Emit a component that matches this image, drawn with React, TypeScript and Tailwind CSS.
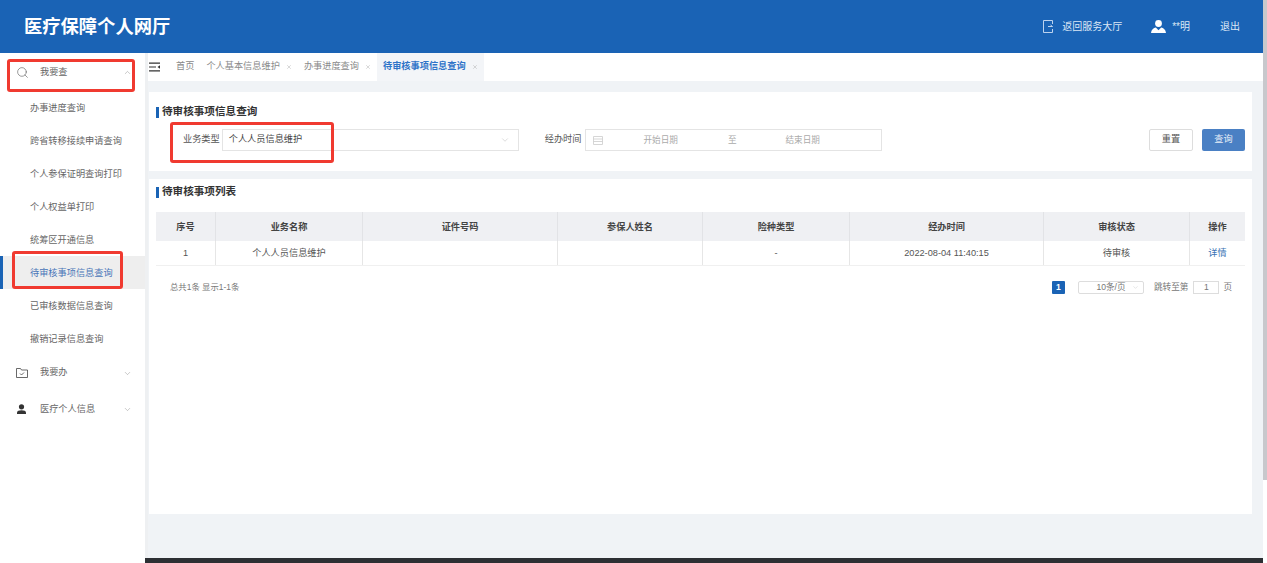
import { ChevronDown, ChevronUp, Search, X } from 'lucide-react';

const font = { fontFamily: '"Liberation Sans", "Noto Sans CJK SC", sans-serif' };

const subMenus = ['办事进度查询', '跨省转移接续申请查询', '个人参保证明查询打印', '个人权益单打印', '统筹区开通信息', '待审核事项信息查询', '已审核数据信息查询', '撤销记录信息查询'];

const columns = [
  { title: '序号', width: 'w-[60px]', value: '1' },
  { title: '业务名称', width: 'w-[147px]', value: '个人人员信息维护' },
  { title: '证件号码', width: 'w-[195px]', value: '' },
  { title: '参保人姓名', width: 'w-[145px]', value: '' },
  { title: '险种类型', width: 'w-[147px]', value: '-' },
  { title: '经办时间', width: 'w-[194px]', value: '2022-08-04 11:40:15' },
  { title: '审核状态', width: 'w-[146px]', value: '待审核' },
  { title: '操作', width: 'w-[55px]', value: '详情' },
];

function SectionTitle({ text }: { text: string }) {
  return (
    <div className="flex items-center h-[14px] text-[10.6px] font-bold text-[#333]">
      <span className="w-[3px] h-[11px] bg-[#1a63b5] mr-[3px]"></span>
      {text}
    </div>
  );
}

function Tab({ text, active }: { text: string; active?: boolean }) {
  return (
    <div className={active ? 'h-[28px] -mt-[1px] px-[6px] flex items-center bg-[#f3f5f8] text-[#2f74c8] font-bold' : 'h-[28px] px-[6px] flex items-center text-[#8a8a8a]'}>
      {text}
      {text !== '首页' && <X size={6} strokeWidth={1.5} className="ml-[6px] text-[#999]" />}
    </div>
  );
}

function RedBox({ className }: { className: string }) {
  return <div className={'absolute border-[3px] border-[#f03a30] rounded-[3px] ' + className}></div>;
}

export default function App() {
  return (
    <div style={font} className="relative w-[1267px] h-[563px] overflow-hidden bg-white flex text-[9.2px] text-[#555]">
      <div className="flex-none w-[1263px] flex flex-col">
        <div className="flex-none h-[53px] bg-[#1a63b5] flex items-center text-white pl-[24px]">
          <div className="text-[18.3px] font-bold">医疗保障个人网厅</div>
          <div className="ml-auto flex items-center text-[10px] text-[#dbe7f5]">
            <svg width="10" height="13" viewBox="0 0 10 13" fill="none" stroke="#cfe0f5" strokeWidth="0.9" className="mr-[9px]">
              <path d="M9.500 4V0.500H0.500v12h9V9" />
              <path d="M5 6.500h4.500M7.500 5l2 1.500" />
            </svg>
            <span>返回服务大厅</span>
            <svg width="15" height="13" viewBox="0 0 15 13" fill="#fff" className="ml-[29px] mr-[6px]">
              <circle cx="7.500" cy="3.500" r="3.400" />
              <path d="M0 13c0.300-3.500 2.500-5 4.800-5.500l2.700 2.700 2.700-2.700c2.300 0.500 4.500 2 4.800 5.500z" />
            </svg>
            <span>**明</span>
            <span className="ml-[30px] mr-[23px]">退出</span>
          </div>
        </div>

        <div className="flex-1 flex min-h-0">
          <div className="flex-none w-[145px] bg-white">
            <div className="h-[38px] pt-[1px] pl-[16px] pr-[13px] flex items-center text-[#666]">
              <Search size={13} strokeWidth={1} className="text-[#444] mr-[11px]" />
              <span>我要查</span>
              <ChevronUp size={9} strokeWidth={1.2} className="ml-auto text-[#888]" />
            </div>
            <div className="flex flex-col">
              {subMenus.map((name) => (
                <div
                  key={name}
                  className={name === '待审核事项信息查询' ? 'h-[33px] pt-[2px] pl-[27px] flex items-center bg-[#eeeeee] text-[#4a76b8] border-l-[3px] border-[#1a63b5]' : 'h-[33px] pt-[2px] pl-[30px] flex items-center text-[#666]'}
                >
                  {name}
                </div>
              ))}
            </div>
            <div className="h-[36px] pl-[16px] pr-[13px] flex items-center text-[#666]">
              <svg width="12" height="10" viewBox="0 0 12 10" fill="none" stroke="#444" strokeWidth="0.8" className="mr-[12px]">
                <path d="M0.500 0.500h4l1 1.500h6v7.500h-11z" />
                <path d="M4 5.500l1.500 1.500 2.500-2.500" />
              </svg>
              <span>我要办</span>
              <ChevronDown size={9} strokeWidth={1.2} className="ml-auto text-[#888]" />
            </div>
            <div className="h-[37px] pl-[16px] pr-[13px] flex items-center text-[#666]">
              <svg width="11" height="11" viewBox="0 0 11 11" fill="#333" className="mr-[13px]">
                <circle cx="5.500" cy="2.800" r="2.600" />
                <path d="M1 10V8.500C1 7 3 6.300 5.500 6.300S10 7 10 8.500V10z" />
              </svg>
              <span>医疗个人信息</span>
              <ChevronDown size={9} strokeWidth={1.2} className="ml-auto text-[#888]" />
            </div>
          </div>

          <div className="flex-1 flex flex-col border-l-[3px] border-[#eef0f2] bg-[#f0f3f6] min-w-0">
            <div className="flex-none h-[28px] bg-white flex items-center pl-[1px]">
              <svg width="11" height="10" viewBox="0 0 11 10" fill="#333" className="mr-[10px]">
                <path d="M0 0.500h11v1.200H0zM0 4.400h7v1.200H0zM0 8.300h11v1.200H0zM11 3.200v3.600L8.500 5z" />
              </svg>
              <Tab text="首页" />
              <Tab text="个人基本信息维护" />
              <Tab text="办事进度查询" />
              <Tab text="待审核事项信息查询" active />
            </div>

            <div className="flex-1 min-h-0 pt-[11px] pr-[11px] pl-[1px] flex flex-col">
              <div className="flex-none h-[79px] bg-white pt-[13px] pl-[7px] pr-[7px]">
                <SectionTitle text="待审核事项信息查询" />
                <div className="mt-[10px] flex items-center h-[22px] pl-[27px]">
                  <span className="mr-[2px]">业务类型</span>
                  <div className="w-[297px] h-[22px] border border-[#e4e4e4] flex items-center pl-[6px] pr-[8px] text-[#444]">
                    个人人员信息维护
                    <ChevronDown size={10} strokeWidth={1} className="ml-auto text-[#aaa]" />
                  </div>
                  <span className="ml-[26px] mr-[3px]">经办时间</span>
                  <div className="w-[297px] h-[22px] border border-[#e4e4e4] flex items-center pl-[7px] text-[8.6px] text-[#aaa]">
                    <svg width="10" height="9" viewBox="0 0 10 9" fill="none" stroke="#ccc" strokeWidth="0.8">
                      <path d="M0.500 0.500h9v8h-9zM0.500 3h9M0.500 5.500h9" />
                    </svg>
                    <span className="ml-[41px]">开始日期</span>
                    <span className="ml-[50px]">至</span>
                    <span className="ml-[49px]">结束日期</span>
                  </div>
                  <button className="ml-auto w-[44px] h-[22px] border border-[#ddd] rounded-[2px] bg-white text-[#555]">重置</button>
                  <button className="ml-[9px] w-[43px] h-[22px] rounded-[2px] bg-[#4a80c4] text-[#e8eff8]">查询</button>
                </div>
              </div>

              <div className="flex-none mt-[8px] h-[335px] bg-white pt-[6px] px-[7px]">
                <SectionTitle text="待审核事项列表" />
                <div className="mt-[13px]">
                  <div className="flex h-[29px] bg-[#eff0f3] font-bold text-[#444]">
                    {columns.map((c) => (
                      <div key={c.title} className={c.width + ' flex-none pt-[2px] flex items-center justify-center border-r border-[#e2e3e6] last:border-r-0'}>
                        {c.title}
                      </div>
                    ))}
                  </div>
                  <div className="flex h-[25px] border-b border-[#f0f0f0]">
                    {columns.map((c) => (
                      <div key={c.title} className={c.width + ' flex-none pt-[1px] flex items-center justify-center border-r border-[#e6e6e6] last:border-r-0 ' + (c.value === '详情' ? 'text-[#3b73b5]' : '')}>
                        {c.value}
                      </div>
                    ))}
                  </div>
                  <div className="flex items-center mt-[15px] h-[13px] pl-[14px] text-[8.6px] text-[#777]">
                    <span className="text-[8.4px]">总共1条 显示1-1条</span>
                    <div className="ml-auto flex items-center pr-[13px]">
                      <span className="w-[13px] h-[13px] bg-[#1a63b5] rounded-[1px] text-white flex items-center justify-center font-bold">1</span>
                      <div className="ml-[13px] w-[66px] h-[13px] border border-[#ddd] rounded-[2px] flex items-center justify-center relative">
                        10条/页
                        <ChevronDown size={7} strokeWidth={1} className="absolute right-[4px] text-[#aaa]" />
                      </div>
                      <span className="ml-[10px]">跳转至第</span>
                      <div className="ml-[5px] w-[26px] h-[13px] border border-[#ddd] flex items-center justify-center">1</div>
                      <span className="ml-[4px]">页</span>
                    </div>
                  </div>
                </div>
              </div>
            </div>
            <div className="flex-none h-[5px] -ml-[3px] bg-[#2c2f33]"></div>
          </div>
        </div>
      </div>

      <div className="flex-none w-[4px]">
        <div className="h-[480px] bg-[#c8c8cc]"></div>
      </div>

      <RedBox className="left-[7px] top-[59px] w-[128px] h-[33px]" />
      <RedBox className="left-[12px] top-[251px] w-[111px] h-[38px]" />
      <RedBox className="left-[170px] top-[122px] w-[164px] h-[41px]" />
    </div>
  );
}
